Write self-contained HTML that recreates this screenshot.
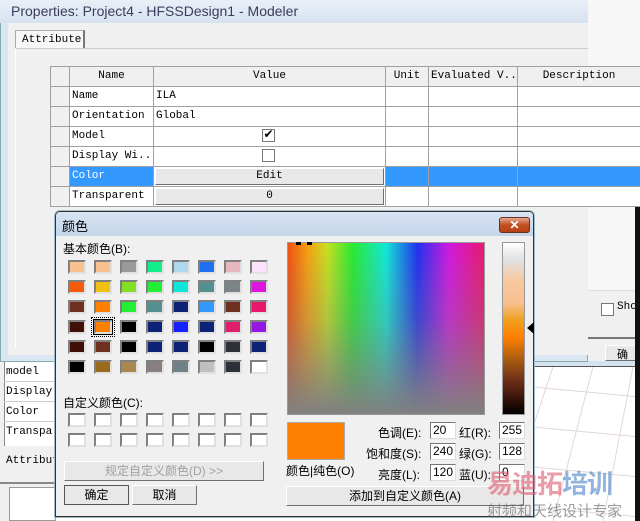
<!DOCTYPE html>
<html><head><meta charset="utf-8"><style>
*{margin:0;padding:0;box-sizing:border-box}
body{width:640px;height:521px;overflow:hidden;position:relative;background:#fff;font-family:"Liberation Mono","Noto Sans CJK SC",monospace;font-size:11px;color:#000}
.a{position:absolute}
.cjk{font-family:"Liberation Sans","Noto Sans CJK SC",sans-serif;font-size:12px}
.c{position:absolute;height:21px;border:1px solid #a0a0a0;background:#fff;white-space:nowrap;overflow:hidden;padding:3px 2px 0;font-size:11px}
.btn{background:#e8e8e8;border:1px solid;border-color:#fff #707070 #707070 #fff;text-align:center;color:#000}
.sw{position:absolute;width:18px;height:14px;border:2px solid;border-color:#808080 #e0e0e0 #e0e0e0 #808080}
.cb{position:absolute;width:13px;height:13px;border:1px solid #777;background:#fff}
.inp{position:absolute;height:17px;width:26px;border:1px solid;border-color:#777 #ddd #ddd #777;background:#fff;font-family:"Liberation Sans",sans-serif;font-size:12px;padding-left:2px;line-height:15px}
</style></head><body>
<!-- right background -->
<div class="a" style="left:588px;top:0;width:52px;height:290px;background:#f7f7f7"></div>
<div class="a" style="left:533px;top:290px;width:107px;height:47px;background:#f0f0f0;border-top:1px solid #ddd"></div>
<div class="cb" style="left:601px;top:303px"></div>
<div class="a" style="left:617px;top:301px;font-size:11px">Sho</div>
<div class="a" style="left:533px;top:337px;width:107px;height:24px;background:#f0f0f0;border-top:2px solid #777"></div>
<div class="a btn" style="left:605px;top:345px;width:35px;height:16px;font-size:11px" >确</div>
<div class="a" style="left:533px;top:361px;width:107px;height:6px;background:#d5e2f0;border-bottom:1px solid #555"></div>
<svg class="a" style="left:533px;top:367px" width="107" height="154"><g stroke="#e2d6d6" stroke-width="1" fill="none"><path d="M0 20L107 30M0 60L107 70M0 100L107 110M0 140L107 150"/><path d="M20 0L0 60M60 0L20 154M100 0L70 154"/></g></svg>
<div class="a" style="left:635px;top:200px;width:5px;height:321px;background:#111"></div>

<!-- Properties window -->
<div class="a" style="left:0;top:0;width:588px;height:362px;background:#dbe6f3;border:1px solid #8aa"></div>
<div class="a" style="left:0;top:0;width:588px;height:23px;background:linear-gradient(#e9eff7,#d6e2f1)"></div>
<div class="a" style="left:11px;top:3px;font-size:14px;color:#3c3c5c;font-family:'Liberation Sans',sans-serif">Properties: Project4 - HFSSDesign1 - Modeler</div>
<div class="a" style="left:8px;top:23px;width:580px;height:332px;background:#f0f0f0"></div>
<div class="a" style="left:15px;top:30px;width:70px;height:19px;background:#f7f7f7;border:1px solid #aaa;border-bottom:none;border-right:2px solid #777;padding:3px 0 0 6px">Attribute</div>
<div class="a" style="left:15px;top:48px;width:573px;height:300px;border-top:1px solid #ccc;border-left:1px solid #fff"></div>
<div id="grid"></div>

<!-- second panel left -->
<div class="a" style="left:0;top:362px;width:56px;height:159px;background:#f0f0f0"></div>
<div class="a" style="left:4px;top:362px;width:52px;height:84px;background:#fff;border-left:1px solid #888"></div>
<div class="a" style="left:6px;top:362px;line-height:20px">model<br>Display.<br>Color<br>Transpa.</div>
<div class="a" style="left:4px;top:381px;width:52px;border-top:1px solid #ccc"></div>
<div class="a" style="left:4px;top:401px;width:52px;border-top:1px solid #ccc"></div>
<div class="a" style="left:4px;top:421px;width:52px;border-top:1px solid #ccc"></div>
<div class="a" style="left:6px;top:455px">Attribut</div>
<div class="a" style="left:0;top:482px;width:56px;border-top:2px solid #888"></div>
<div class="a" style="left:9px;top:487px;width:47px;height:34px;background:#fff;border:1px solid #999"></div>

<!-- dialog -->
<div class="a" style="left:55px;top:211px;width:479px;height:306px;background:#f0f0f0;border:1px solid #333;border-radius:5px 5px 0 0;box-shadow:0 0 0 1px #9bc"></div>
<div class="a" style="left:56px;top:212px;width:477px;height:24px;background:linear-gradient(#d7e4f2,#c4d5ea);border-radius:4px 4px 0 0"></div>
<div class="a cjk" style="left:62px;top:216px;font-size:13px">颜色</div>
<div class="a" style="left:499px;top:217px;width:31px;height:16px;border-radius:3px;background:linear-gradient(#e8a890,#c05020 50%,#b84018);border:1px solid #6a3020;color:#fff;text-align:center;font:bold 12px 'Liberation Sans',sans-serif;line-height:14px">✕</div>

<div class="a cjk" style="left:63px;top:240px">基本颜色(B):</div>
<div id="basic"></div>
<div class="a" style="left:91px;top:317px;width:24px;height:20px;border:1px dotted #000"></div>
<div class="a" style="left:93px;top:319px;width:20px;height:16px;border:1px solid #000"></div>
<div class="a cjk" style="left:63px;top:394px">自定义颜色(C):</div>

<div class="a btn cjk" style="left:64px;top:461px;width:200px;height:20px;color:#a0a0a0;line-height:18px">规定自定义颜色(D) &gt;&gt;</div>
<div class="a btn cjk" style="left:64px;top:485px;width:65px;height:20px;line-height:18px;border:1px solid #555">确定</div>
<div class="a btn cjk" style="left:132px;top:485px;width:65px;height:20px;line-height:18px">取消</div>

<div class="a" style="left:287px;top:242px;width:198px;height:173px;border:1px solid #999;background:linear-gradient(to bottom,rgba(128,128,128,0) 0%,rgba(128,128,128,.3) 45%,rgba(128,128,128,.75) 80%,rgba(128,128,128,1) 100%),linear-gradient(to right,#f25010,#f5a010 10%,#c8e020 20%,#28ec30 33%,#10e8d8 50%,#2030f0 66%,#d018e0 82%,#ea1870)"></div>
<div class="a" style="left:296px;top:242px;width:16px;height:3px;background:repeating-linear-gradient(to right,#000 0 5px,transparent 5px 11px)"></div>
<div class="a" style="left:502px;top:242px;width:23px;height:173px;border:1px solid #999;background:linear-gradient(#fff,#e0e0e0 10%,#f8c8a0 22%,#f8c090 35%,#f0a020 45%,#ff8000 55%,#b06010 67%,#703018 80%,#301008 92%,#000)"></div>
<div class="a" style="left:527px;top:322px;width:0;height:0;border:6px solid transparent;border-right:7px solid #000;border-left:none"></div>

<div class="a" style="left:287px;top:422px;width:58px;height:38px;background:#ff8000;border:1px solid #aaa"></div>
<div class="a cjk" style="left:286px;top:462px">颜色|纯色(O)</div>
<div class="a cjk" style="left:378px;top:424px">色调(E):</div>
<div class="a cjk" style="left:366px;top:445px">饱和度(S):</div>
<div class="a cjk" style="left:378px;top:466px">亮度(L):</div>
<div class="inp" style="left:430px;top:422px">20</div>
<div class="inp" style="left:430px;top:443px">240</div>
<div class="inp" style="left:430px;top:464px">120</div>
<div class="a cjk" style="left:459px;top:424px">红(R):</div>
<div class="a cjk" style="left:459px;top:445px">绿(G):</div>
<div class="a cjk" style="left:459px;top:466px">蓝(U):</div>
<div class="inp" style="left:499px;top:422px">255</div>
<div class="inp" style="left:499px;top:443px">128</div>
<div class="inp" style="left:499px;top:464px">0</div>
<div class="a btn cjk" style="left:286px;top:486px;width:238px;height:20px;line-height:18px">添加到自定义颜色(A)</div>

<div class="a" style="left:487px;top:464px;font:bold 26px 'Noto Sans CJK SC',sans-serif;color:rgba(220,90,110,.6);letter-spacing:-1px">易迪拓<span style="color:rgba(70,130,200,.6)">培训</span></div>
<div class="a" style="left:487px;top:500px;font:15px 'Noto Sans CJK SC',sans-serif;color:rgba(90,90,90,.6)">射频和天线设计专家</div>

<script>
var X=[50,69,153,385,428,517,640];
var rows=[["Name","Value","Unit","Evaluated V...","Description"],["Name","ILA","","",""],["Orientation","Global","","",""],["Model","","","",""],["Display Wi...","","","",""],["Color","","","",""],["Transparent","","","",""]];
var g="";
for(var r=0;r<7;r++){var y=66+r*20;
 for(var k=0;k<6;k++){
  var bg="#fff",col="#000",txt=k?rows[r][k-1]:"",al="left";
  if(k==0||r==0)bg="#f0f0f0";
  if(r==0&&k!=4)al="center";
  if(r==5&&k!=0&&k!=2){bg="#3399ff";col="#fff"}
  g+='<div class="c" style="left:'+X[k]+'px;top:'+y+'px;width:'+(X[k+1]-X[k]+1)+'px;background:'+bg+';color:'+col+';text-align:'+al+'">'+txt+'</div>';
 }}
g+='<div class="cb" style="left:262px;top:129px;font-size:12px;line-height:11px;text-align:center">✔</div>';
g+='<div class="cb" style="left:262px;top:149px"></div>';
g+='<div class="a btn" style="left:155px;top:168px;width:229px;height:17px;line-height:15px">Edit</div>';
g+='<div class="a btn" style="left:155px;top:188px;width:229px;height:17px;line-height:15px">0</div>';
document.getElementById("grid").innerHTML=g;
var c=[["#f9c090","#f9c090","#999b98","#12ef8a","#b0d8ec","#1f70ef","#e7b7c0","#fde2fc"],
["#f55a0b","#efc016","#83e024","#23ed35","#10e6d8","#559090","#7b8486","#de15de"],
["#703020","#ff8000","#23ef35","#559090","#0c2378","#3399ff","#703020","#e8176b"],
["#401008","#ff8000","#000000","#0c2378","#1621ff","#0c2378","#e01e6e","#9318e4"],
["#401008","#703020","#000000","#0c2378","#0c2378","#000000","#2c3038","#0c2378"],
["#000000","#9a6b1a","#a98850","#888080","#6f8088","#c0c0c0","#2c3038","#ffffff"]];
var h="";
for(var r=0;r<6;r++)for(var k=0;k<8;k++)h+='<div class="sw" style="left:'+(68+k*26)+'px;top:'+(260+r*20)+'px;background:'+c[r][k]+'"></div>';
for(var r=0;r<2;r++)for(var k=0;k<8;k++)h+='<div class="sw" style="left:'+(68+k*26)+'px;top:'+(413+r*20)+'px;background:#fff"></div>';
document.getElementById("basic").innerHTML=h;
</script>
</body></html>
